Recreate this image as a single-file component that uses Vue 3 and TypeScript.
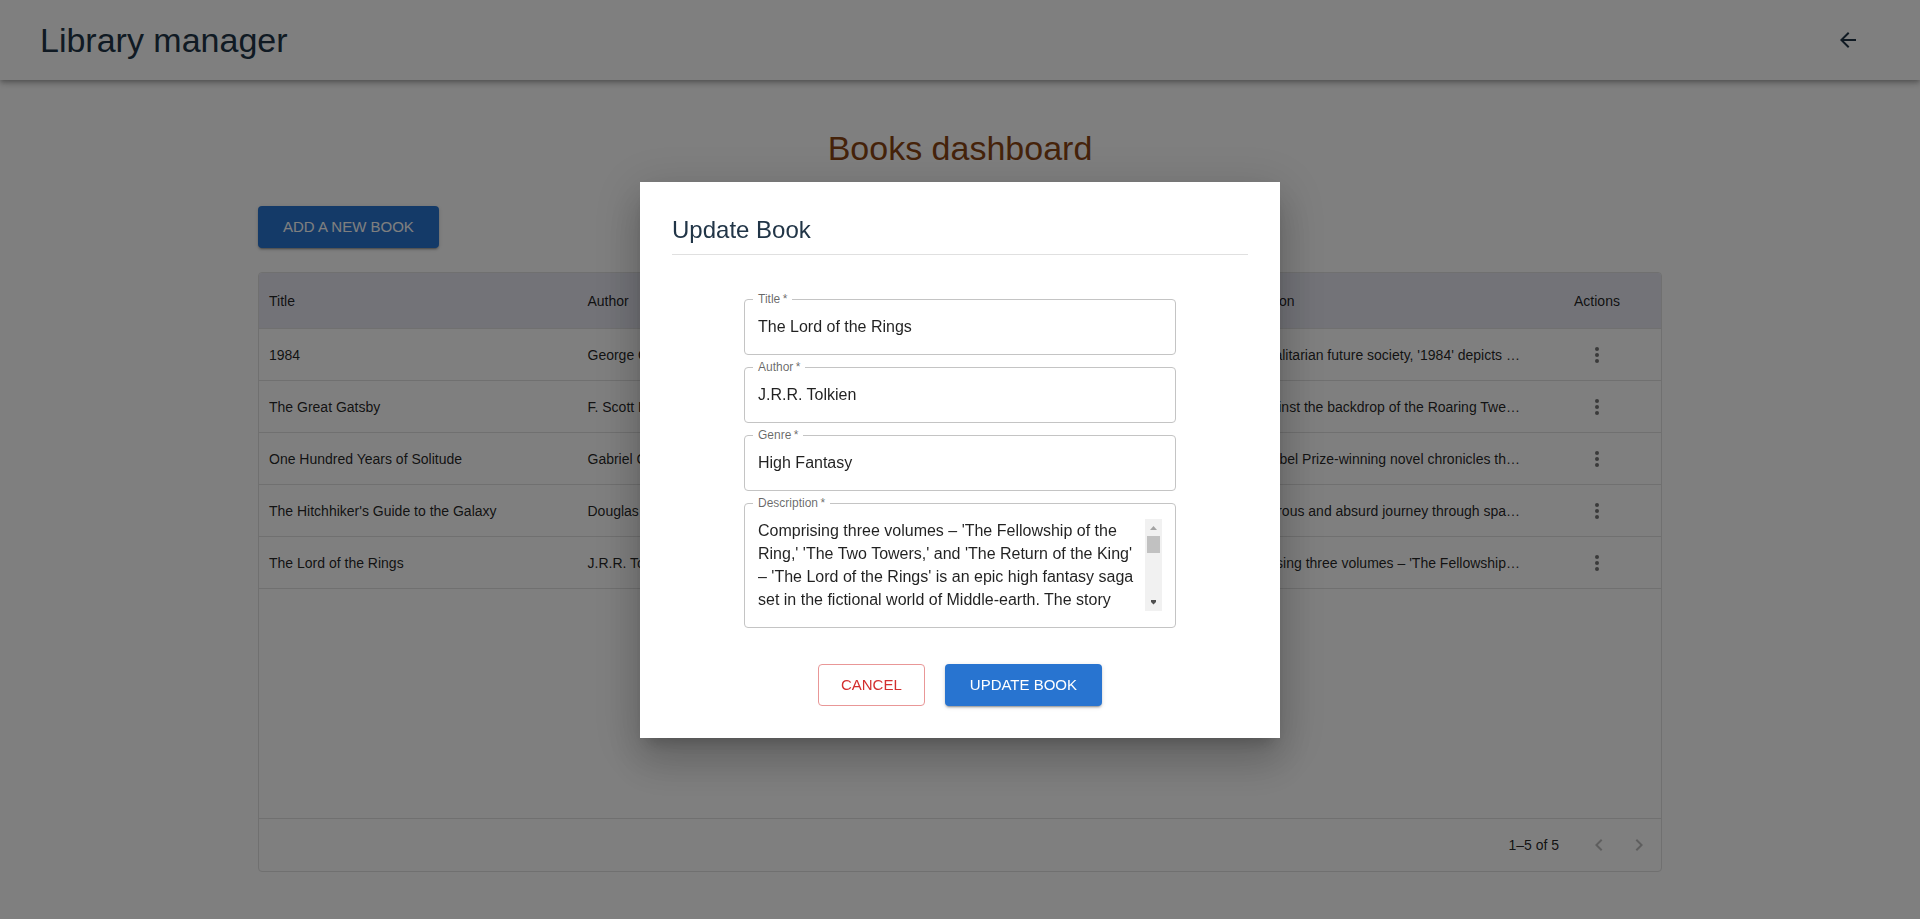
<script setup lang="ts">
import { reactive, ref } from 'vue'

interface Book {
  title: string
  author: string
  genre: string
  summary: string
}

const books: Book[] = [
  { title: '1984', author: 'George Orwell', genre: 'Dystopian Fiction', summary: "In a totalitarian future society, '1984' depicts …" },
  { title: 'The Great Gatsby', author: 'F. Scott Fitzgerald', genre: 'Classic Literature', summary: 'Set against the backdrop of the Roaring Twe…' },
  { title: 'One Hundred Years of Solitude', author: 'Gabriel García Márquez', genre: 'Magical Realism', summary: 'This Nobel Prize-winning novel chronicles th…' },
  { title: "The Hitchhiker's Guide to the Galaxy", author: 'Douglas Adams', genre: 'Science Fiction', summary: 'A humorous and absurd journey through spa…' },
  { title: 'The Lord of the Rings', author: 'J.R.R. Tolkien', genre: 'High Fantasy', summary: "Comprising three volumes – 'The Fellowship…" },
]

const form = reactive({
  title: 'The Lord of the Rings',
  author: 'J.R.R. Tolkien',
  genre: 'High Fantasy',
  description:
    "Comprising three volumes – 'The Fellowship of the Ring,' 'The Two Towers,' and 'The Return of the King' – 'The Lord of the Rings' is an epic high fantasy saga set in the fictional world of Middle-earth. The story follows a young hobbit on his quest to destroy the One Ring.",
})

const fields: { key: 'title' | 'author' | 'genre'; label: string }[] = [
  { key: 'title', label: 'Title' },
  { key: 'author', label: 'Author' },
  { key: 'genre', label: 'Genre' },
]

const dialogOpen = ref(true)
const area = ref<HTMLTextAreaElement | null>(null)

function scrollArea(step: number): void {
  area.value?.scrollBy({ top: step })
}
</script>

<template>
  <div class="page">
    <header class="topbar">
      <span class="brand">Library manager</span>
      <button class="back" type="button" aria-label="Back">
        <svg viewBox="0 0 24 24" width="24" height="24"><path d="M20 11H7.83l5.59-5.59L12 4l-8 8 8 8 1.41-1.41L7.83 13H20v-2z" /></svg>
      </button>
    </header>

    <main class="content">
      <h1>Books dashboard</h1>
      <button class="btn primary" type="button">ADD A NEW BOOK</button>

      <div class="grid">
        <table>
          <thead>
            <tr>
              <th>Title</th>
              <th>Author</th>
              <th>Genre</th>
              <th>Description</th>
              <th class="actions">Actions</th>
            </tr>
          </thead>
          <tbody>
            <tr v-for="book in books" :key="book.title">
              <td>{{ book.title }}</td>
              <td>{{ book.author }}</td>
              <td>{{ book.genre }}</td>
              <td class="summary">{{ book.summary }}</td>
              <td class="actions">
                <button class="more" type="button" :aria-label="'Actions for ' + book.title">
                  <svg viewBox="0 0 24 24" width="24" height="24">
                    <circle cx="12" cy="6" r="2" />
                    <circle cx="12" cy="12" r="2" />
                    <circle cx="12" cy="18" r="2" />
                  </svg>
                </button>
              </td>
            </tr>
          </tbody>
        </table>
        <div class="pager">
          <span class="range">1–5 of 5</span>
          <button type="button" disabled aria-label="Previous page">
            <svg viewBox="0 0 24 24" width="24" height="24"><path d="M15.41 7.41 14 6l-6 6 6 6 1.41-1.41L10.83 12z" /></svg>
          </button>
          <button type="button" disabled aria-label="Next page">
            <svg viewBox="0 0 24 24" width="24" height="24"><path d="M8.59 16.59 13.17 12 8.59 7.41 10 6l6 6-6 6z" /></svg>
          </button>
        </div>
      </div>
    </main>

    <div v-if="dialogOpen" class="backdrop">
      <form class="dialog" role="dialog" aria-labelledby="dialog-title" @submit.prevent="dialogOpen = false">
        <h2 id="dialog-title">Update Book</h2>
        <div class="fields">
          <div v-for="f in fields" :key="f.key" class="field">
            <label :for="'book-' + f.key">{{ f.label }}&thinsp;*</label>
            <input :id="'book-' + f.key" v-model="form[f.key]" type="text" required />
          </div>
          <div class="field multiline">
            <label for="book-description">Description&thinsp;*</label>
            <textarea id="book-description" ref="area" v-model="form.description" rows="4" required></textarea>
            <div class="scrollbar">
              <button type="button" aria-label="Scroll up" @click="scrollArea(-23)">
                <svg viewBox="0 0 17 17" width="17" height="17"><path class="dim" d="M5 11L8.500 7L12 11z" /></svg>
              </button>
              <span class="thumb"></span>
              <button class="down" type="button" aria-label="Scroll down" @click="scrollArea(23)">
                <svg viewBox="0 0 17 17" width="17" height="17"><path d="M6 6H11V8L8.500 10.500L6 8z" /></svg>
              </button>
            </div>
          </div>
        </div>
        <div class="buttons">
          <button class="btn outlined" type="button" @click="dialogOpen = false">CANCEL</button>
          <button class="btn primary" type="submit">UPDATE BOOK</button>
        </div>
      </form>
    </div>
  </div>
</template>

<style>
body {
  margin: 0;
  background: #fff;
}
</style>

<style scoped>
.page,
.page * {
  box-sizing: border-box;
}

.page {
  min-height: 100vh;
  font-family: "Liberation Sans", Arial, sans-serif;
  font-size: 14px;
  color: rgba(0, 0, 0, 0.87);
}

button,
input,
textarea {
  margin: 0;
  border: 0;
  padding: 0;
  background: none;
  font-family: inherit;
  color: inherit;
}

svg {
  display: block;
  fill: currentColor;
}

.topbar {
  display: flex;
  align-items: center;
  justify-content: space-between;
  height: 80px;
  padding: 0 40px;
  color: #213547;
  box-shadow: 0 2px 4px -1px rgba(0, 0, 0, 0.2), 0 4px 5px rgba(0, 0, 0, 0.14), 0 1px 10px rgba(0, 0, 0, 0.12);
}

.brand {
  font-size: 34px;
  line-height: 40px;
}

.back {
  display: flex;
  align-items: center;
  justify-content: center;
  width: 64px;
  height: 40px;
}

.content {
  max-width: 1452px;
  margin: 0 auto;
  padding: 48px 24px 40px;
}

h1 {
  margin: 0 0 38px;
  font-size: 34px;
  font-weight: 400;
  line-height: 40px;
  text-align: center;
  color: #8b4513;
}

.btn {
  height: 42px;
  padding: 0 25px;
  border-radius: 4px;
  font-size: 15px;
  line-height: 26px;
}

.primary {
  color: #fff;
  background: #2874d0;
  box-shadow: 0 3px 1px -2px rgba(0, 0, 0, 0.2), 0 2px 2px rgba(0, 0, 0, 0.14), 0 1px 5px rgba(0, 0, 0, 0.12);
}

.outlined {
  padding: 0 22px;
  border: 1px solid #e99797;
  color: #d32f2f;
}

.grid {
  display: flex;
  flex-direction: column;
  min-height: 600px;
  margin-top: 24px;
  border: 1px solid #e0e0e0;
  border-radius: 4px;
  overflow: hidden;
}

table {
  width: 100%;
  table-layout: fixed;
  border-collapse: separate;
  border-spacing: 0;
}

th,
td {
  height: 52px;
  padding: 0 10px;
  border-bottom: 1px solid #e0e0e0;
  font-weight: 400;
  text-align: left;
  white-space: nowrap;
  overflow: hidden;
  text-overflow: ellipsis;
}

th {
  height: 56px;
  background: #e6e7f1;
}

td.summary {
  padding-right: 13px;
  text-align: right;
}

th.actions,
td.actions {
  width: 128px;
  text-align: center;
}

.more {
  display: block;
  margin: 0 auto;
  color: rgba(0, 0, 0, 0.54);
}

.pager {
  display: flex;
  align-items: center;
  justify-content: flex-end;
  height: 53px;
  margin-top: auto;
  padding-right: 2px;
  border-top: 1px solid #e0e0e0;
}

.range {
  margin-right: 20px;
}

.pager button {
  padding: 8px;
  color: rgba(0, 0, 0, 0.26);
}

.backdrop {
  position: fixed;
  inset: 0;
  display: flex;
  align-items: center;
  justify-content: center;
  background: rgba(0, 0, 0, 0.5);
}

.dialog {
  width: 640px;
  max-width: 100%;
  padding: 32px;
  background: #fff;
  box-shadow: 0 11px 15px -7px rgba(0, 0, 0, 0.2), 0 24px 38px 3px rgba(0, 0, 0, 0.14), 0 9px 46px 8px rgba(0, 0, 0, 0.12);
}

h2 {
  margin: 0;
  padding-bottom: 8px;
  border-bottom: 1px solid #e0e0e0;
  font-size: 24px;
  font-weight: 400;
  line-height: 32px;
  color: #213547;
}

.fields {
  display: flex;
  flex-direction: column;
  gap: 12px;
  width: 75%;
  margin: 44px auto 36px;
}

.field {
  position: relative;
  display: flex;
  height: 56px;
  padding: 0 13px;
  border: 1px solid #c4c4c4;
  border-radius: 4px;
}

.field label {
  position: absolute;
  top: -9px;
  left: 8px;
  padding: 0 5px;
  background: #fff;
  font-size: 12px;
  line-height: 16px;
  color: rgba(0, 0, 0, 0.6);
}

.field input,
.field textarea {
  flex: 1;
  min-width: 0;
  outline: none;
  font-size: 16px;
  line-height: 23px;
}

.field.multiline {
  height: auto;
  padding: 15px 13px 16px;
}

.field textarea {
  height: 92px;
  resize: none;
  overflow: hidden;
}

.scrollbar {
  display: flex;
  flex-direction: column;
  width: 17px;
  background: #f1f1f1;
  color: #505050;
}

.scrollbar .dim {
  fill: #a3a3a3;
}

.thumb {
  height: 17px;
  margin: 0 2px;
  background: #c1c1c1;
}

.down {
  margin-top: auto;
}

.buttons {
  display: flex;
  justify-content: center;
  gap: 20px;
}
</style>
